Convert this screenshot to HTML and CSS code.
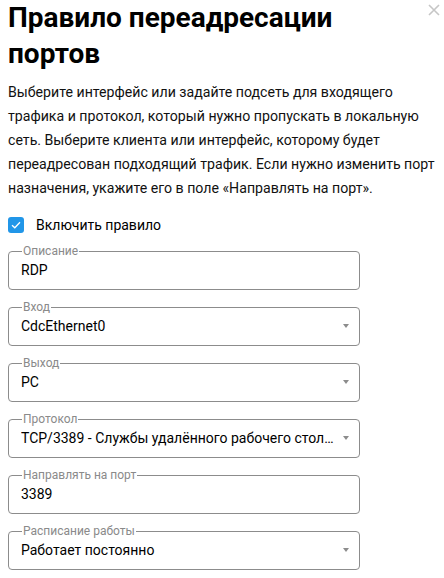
FILE: index.html
```html
<!DOCTYPE html>
<html lang="ru">
<head>
  <meta charset="UTF-8">
  <title>Правило переадресации портов</title>
  <link rel="stylesheet" href="styles.css">
</head>
<body>
  <div class="dialog">
    <button class="close" title="Закрыть">
      <svg width="12" height="12" viewBox="0 0 12 12"><path d="M1 1L11 11M11 1L1 11" stroke="#c6c6c6" stroke-width="1.6" fill="none"/></svg>
    </button>

    <h1>Правило переадресации портов</h1>
    <p class="hint">Выберите интерфейс или задайте подсеть для входящего трафика и протокол, который нужно пропускать в локальную сеть. Выберите клиента или интерфейс, которому будет переадресован подходящий трафик. Если нужно изменить порт назначения, укажите его в поле «Направлять на порт».</p>

    <label class="check">
      <span class="box">
        <svg width="10" height="8" viewBox="0 0 10 8"><path d="M1 4.2L3.8 6.8L9 1.2" stroke="#fff" stroke-width="1.3" fill="none"/></svg>
      </span>
      Включить правило
    </label>

    <fieldset class="field">
      <legend>Описание</legend>
      <div class="value">RDP</div>
    </fieldset>

    <fieldset class="field">
      <legend>Вход</legend>
      <div class="value select">CdcEthernet0</div>
    </fieldset>

    <fieldset class="field">
      <legend>Выход</legend>
      <div class="value select">PC</div>
    </fieldset>

    <fieldset class="field">
      <legend>Протокол</legend>
      <div class="value select">TCP/3389 - Службы удалённого рабочего стола (RDP)</div>
    </fieldset>

    <fieldset class="field">
      <legend>Направлять на порт</legend>
      <div class="value">3389</div>
    </fieldset>

    <fieldset class="field">
      <legend>Расписание работы</legend>
      <div class="value select">Работает постоянно</div>
    </fieldset>
  </div>
</body>
</html>
```

FILE: styles.css
```css
body {
  margin: 0;
  font-family: Roboto, "Noto Sans", sans-serif;
  color: #000;
  background: #fff;
}
.dialog {
  position: relative;
  padding: 0 0 0 8px;
}
.close {
  position: absolute;
  top: 4px;
  right: 4px;
  background: none;
  border: none;
  padding: 0;
  width: 12px;
  height: 12px;
  cursor: pointer;
}
h1 {
  font-size: 28px;
  line-height: 36px;
  font-weight: 700;
  margin: 0;
  padding: 0 32px 0 0;
}
.hint {
  font-size: 14.15px;
  line-height: 24px;
  margin: 8px 0 0;
  color: #111;
}
.check {
  display: flex;
  align-items: center;
  gap: 12px;
  font-size: 14px;
  margin-top: 16px;
  height: 18px;
}
.box {
  width: 16px;
  height: 16px;
  border-radius: 3px;
  background: #2196e8;
  display: flex;
  align-items: center;
  justify-content: center;
}
.field {
  width: 352px;
  box-sizing: border-box;
  margin: 10px 0 0;
  padding: 0 10px 7px 12px;
  border: 1px solid #8c8c8c;
  border-radius: 4px;
  min-width: 0;
}
.field legend {
  font-size: 12px;
  line-height: 14px;
  color: #8a8a8a;
  padding: 0 1px;
  margin-left: 1px;
}
.value {
  font-size: 14px;
  line-height: 24px;
  white-space: nowrap;
  overflow: hidden;
  text-overflow: ellipsis;
}
.select {
  position: relative;
  padding-right: 14px;
}
.select::after {
  content: "";
  position: absolute;
  right: 0;
  top: 10px;
  border-left: 3px solid transparent;
  border-right: 3px solid transparent;
  border-top: 4px solid #8c8c8c;
}
```
